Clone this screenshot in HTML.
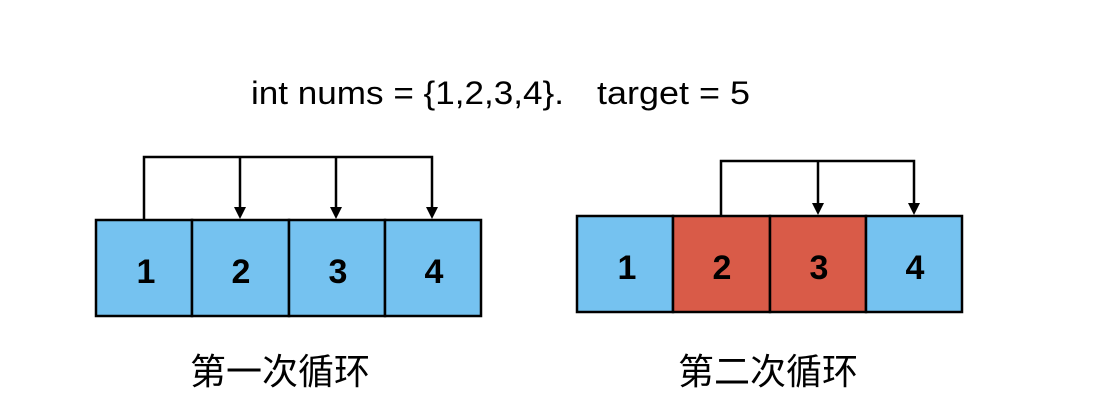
<!DOCTYPE html>
<html><head><meta charset="utf-8"><style>
body{margin:0;background:#fff;width:1096px;height:414px;overflow:hidden}
svg text{font-family:"Liberation Sans","Noto Sans CJK SC",sans-serif}
</style></head><body>
<svg width="1096" height="414" xmlns="http://www.w3.org/2000/svg">
<text x="251" y="104" font-size="32" fill="#000" textLength="313" lengthAdjust="spacingAndGlyphs">int nums = {1,2,3,4}.</text>
<text x="597" y="104" font-size="32" fill="#000" textLength="153" lengthAdjust="spacingAndGlyphs">target = 5</text>
<g stroke="#000" stroke-width="2.5">
<rect x="96" y="220" width="96" height="96" fill="#75c2f0"/>
<rect x="192" y="220" width="97" height="96" fill="#75c2f0"/>
<rect x="289" y="220" width="96" height="96" fill="#75c2f0"/>
<rect x="385" y="220" width="96" height="96" fill="#75c2f0"/>
<rect x="577" y="216" width="96" height="96" fill="#75c2f0"/>
<rect x="673" y="216" width="97" height="96" fill="#d95b48"/>
<rect x="770" y="216" width="96" height="96" fill="#d95b48"/>
<rect x="866" y="216" width="96" height="96" fill="#75c2f0"/>
<polyline points="144,220 144,157 432,157 432,208" fill="none"/>
<line x1="240" y1="157" x2="240" y2="208"/>
<line x1="336" y1="157" x2="336" y2="208"/>
<polyline points="721,216 721,161 914,161 914,204" fill="none"/>
<line x1="818" y1="161" x2="818" y2="204"/>
</g>
<g fill="#000">
<polygon points="234,207 246,207 240,219"/>
<polygon points="330,207 342,207 336,219"/>
<polygon points="426,207 438,207 432,219"/>
<polygon points="812,203 824,203 818,215"/>
<polygon points="908,203 920,203 914,215"/>
</g>
<g font-size="34" font-weight="bold" text-anchor="middle">
<text x="146" y="283">1</text><text x="241" y="283">2</text><text x="338" y="283">3</text><text x="434" y="283">4</text>
<text x="627" y="279">1</text><text x="722" y="279">2</text><text x="819" y="279">3</text><text x="915" y="279">4</text>
</g>
<text x="190" y="384" font-size="36">第一次循环</text>
<text x="678" y="384" font-size="36">第二次循环</text>
</svg>
</body></html>
